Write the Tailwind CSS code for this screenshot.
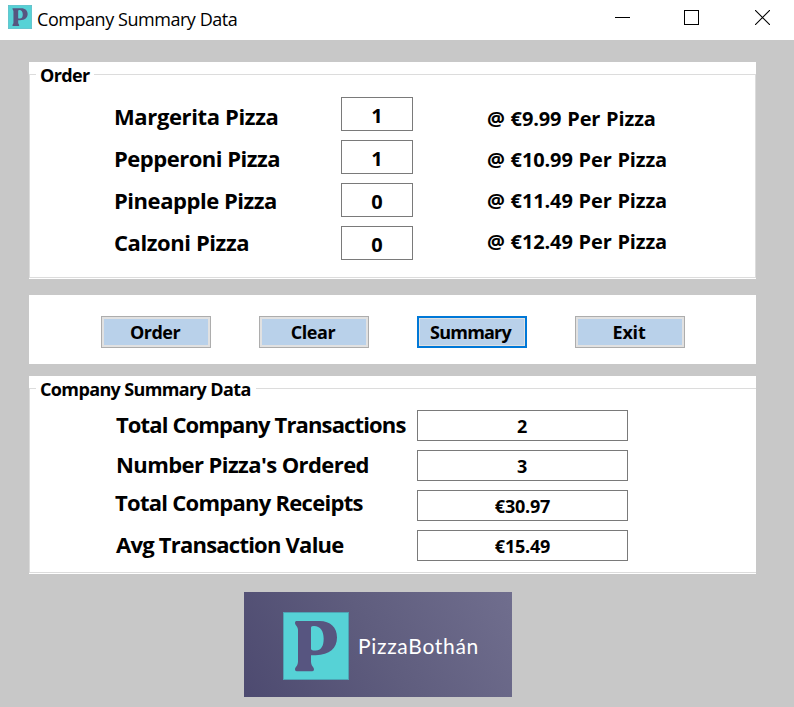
<!DOCTYPE html>
<html lang="en">
<head>
<meta charset="utf-8">
<title>Company Summary Data</title>
<script src="https://cdn.jsdelivr.net/npm/@tailwindcss/browser@4"></script>
</head>
<body class="w-[794px] h-[707px] overflow-hidden bg-[#c8c8c8] font-['Open_Sans','Noto_Sans',sans-serif] font-bold text-black">
<svg class="hidden">
  <symbol id="p-logo" viewBox="0 0 198 203" preserveAspectRatio="none">
    <rect x="1.500" y="1.500" width="195" height="200" fill="#56d2d6" stroke="#4ea5b5" stroke-width="3"/>
    <path fill="#575580" fill-rule="evenodd" d="M40 27H110C142 27 162 46 162 76C162 108 140 128 98 129L84 129V148C84 162 93 164 93 172Q93 177 88 177H41Q36 177 36 172C36 164 45 162 45 148V54C45 42 36 40 36 32Q36 27 40 27ZM84 46V110Q84 115 91 115H98C114 115 122 102 122 80C122 57 112 42 93 42Q84 42 84 46Z"/>
  </symbol>
</svg>

<header class="flex h-10 bg-white pl-2">
  <svg class="mt-[5px] h-6 w-6"><use href="#p-logo"/></svg>
  <h1 class="ml-[5px] flex-1 whitespace-nowrap text-[18px] leading-[38px] font-normal tracking-[-0.45px]">Company Summary Data</h1>
  <div class="mr-6 flex gap-[54px] pt-[10px]">
    <svg class="h-[15px] w-[15px]" viewBox="0 0 15 15" shape-rendering="crispEdges"><path d="M0 7.500H15" stroke="#000"/></svg>
    <svg class="h-[15px] w-[15px]" viewBox="0 0 15 15" shape-rendering="crispEdges"><rect x=".5" y=".5" width="14" height="14" fill="none" stroke="#000"/></svg>
    <svg class="ml-[2px] h-[15px] w-[15px]" viewBox="0 0 15 15"><path d="M0 0L15 15M15 0L0 15" stroke="#000" stroke-width="1.100"/></svg>
  </div>
</header>

<main class="ml-[29px] w-[727px]">
  <section class="relative mt-[22px] h-[217px] bg-white pt-3 pb-px">
    <h2 class="absolute top-0 left-[7px] h-[26px] w-[58px] bg-white pl-[4px] text-[18px] leading-[26px] whitespace-nowrap tracking-[-0.65px]">Order</h2>
    <div class="flex h-[204px] border border-[#dcdcdc] text-xl">
      <div class="w-[311px] pl-[84px] pt-[20px] text-[22px] leading-[42px] whitespace-nowrap">
        <div class="tracking-[-0.37px]">Margerita Pizza</div>
        <div class="tracking-[-0.5px]">Pepperoni Pizza</div>
        <div class="tracking-[-0.46px]">Pineapple Pizza</div>
        <div class="tracking-[-0.42px]">Calzoni Pizza</div>
      </div>
      <div class="flex w-[72px] flex-col gap-[9px] pt-[22px] text-center leading-9">
        <div class="h-[34px] border border-[#7a7a7a]">1</div>
        <div class="h-[34px] border border-[#7a7a7a]">1</div>
        <div class="h-[34px] border border-[#7a7a7a]">0</div>
        <div class="h-[34px] border border-[#7a7a7a]">0</div>
      </div>
      <div class="pl-[74px] pt-[23px] leading-[41px] tracking-[-0.12px] [word-spacing:0.7px] whitespace-nowrap">
        <div>@ €9.99 Per Pizza</div>
        <div>@ €10.99 Per Pizza</div>
        <div>@ €11.49 Per Pizza</div>
        <div>@ €12.49 Per Pizza</div>
      </div>
    </div>
  </section>

  <nav class="mt-4 flex h-[69px] gap-12 bg-white pt-[21px] pl-[72px] text-[18px] leading-[26px]">
    <button class="h-8 w-[110px] border border-[#adadad] bg-[#e1e1e1] p-[2px]"><span class="block h-[26px] bg-[#b9d1ea] pr-[2px] tracking-[-0.5px]">Order</span></button>
    <button class="h-8 w-[110px] border border-[#adadad] bg-[#e1e1e1] p-[2px]"><span class="block h-[26px] bg-[#b9d1ea] pr-[2px] tracking-[-0.45px]">Clear</span></button>
    <button class="h-8 w-[110px] border-2 border-[#0078d7] bg-[#e1e1e1] p-px"><span class="block h-[26px] bg-[#b9d1ea] pr-[3px] tracking-[-0.8px]">Summary</span></button>
    <button class="h-8 w-[110px] border border-[#adadad] bg-[#e1e1e1] p-[2px]"><span class="block h-[26px] bg-[#b9d1ea] pr-[2px] tracking-[-0.2px]">Exit</span></button>
  </nav>

  <section class="relative mt-3 h-[198px] bg-white pt-3 pb-px">
    <h2 class="absolute top-0 left-[7px] h-[26px] w-[220px] bg-white pl-[4px] text-[18px] leading-[26px] whitespace-nowrap tracking-[-0.63px]">Company Summary Data</h2>
    <div class="flex h-[185px] border border-r-0 border-[#dcdcdc]">
      <div class="w-[387px] pl-[86px] pt-[15px] text-[22px] leading-10 whitespace-nowrap">
        <div class="tracking-[-0.87px]">Total Company Transactions</div>
        <div class="tracking-[-0.58px]">Number Pizza's Ordered</div>
        <div class="-mt-[2px] -ml-px tracking-[-0.73px]">Total Company Receipts</div>
        <div class="mt-[2px] tracking-[-0.77px]">Avg Transaction Value</div>
      </div>
      <div class="flex w-[211px] flex-col gap-[9px] pt-[21px] text-center text-[18px] leading-[31px] tracking-[-0.2px]">
        <div class="h-[31px] border border-[#7a7a7a] pr-px">2</div>
        <div class="h-[31px] border border-[#7a7a7a] pr-px">3</div>
        <div class="h-[31px] border border-[#7a7a7a]">€30.97</div>
        <div class="h-[31px] border border-[#7a7a7a]">€15.49</div>
      </div>
    </div>
  </section>

  <div class="mt-[18px] ml-[215px] flex h-[105px] w-[268px] bg-linear-60 from-[#4d4a70] via-[#5f5d7e] to-[#706e8e] pt-5 pl-[39px]">
    <svg class="h-[68px] w-[66px] shrink-0"><use href="#p-logo"/></svg>
    <span class="ml-[9px] font-[Lato] text-[21px] leading-[68px] font-normal tracking-[0.7px] text-white">PizzaBothán</span>
  </div>
</main>
</body>
</html>
